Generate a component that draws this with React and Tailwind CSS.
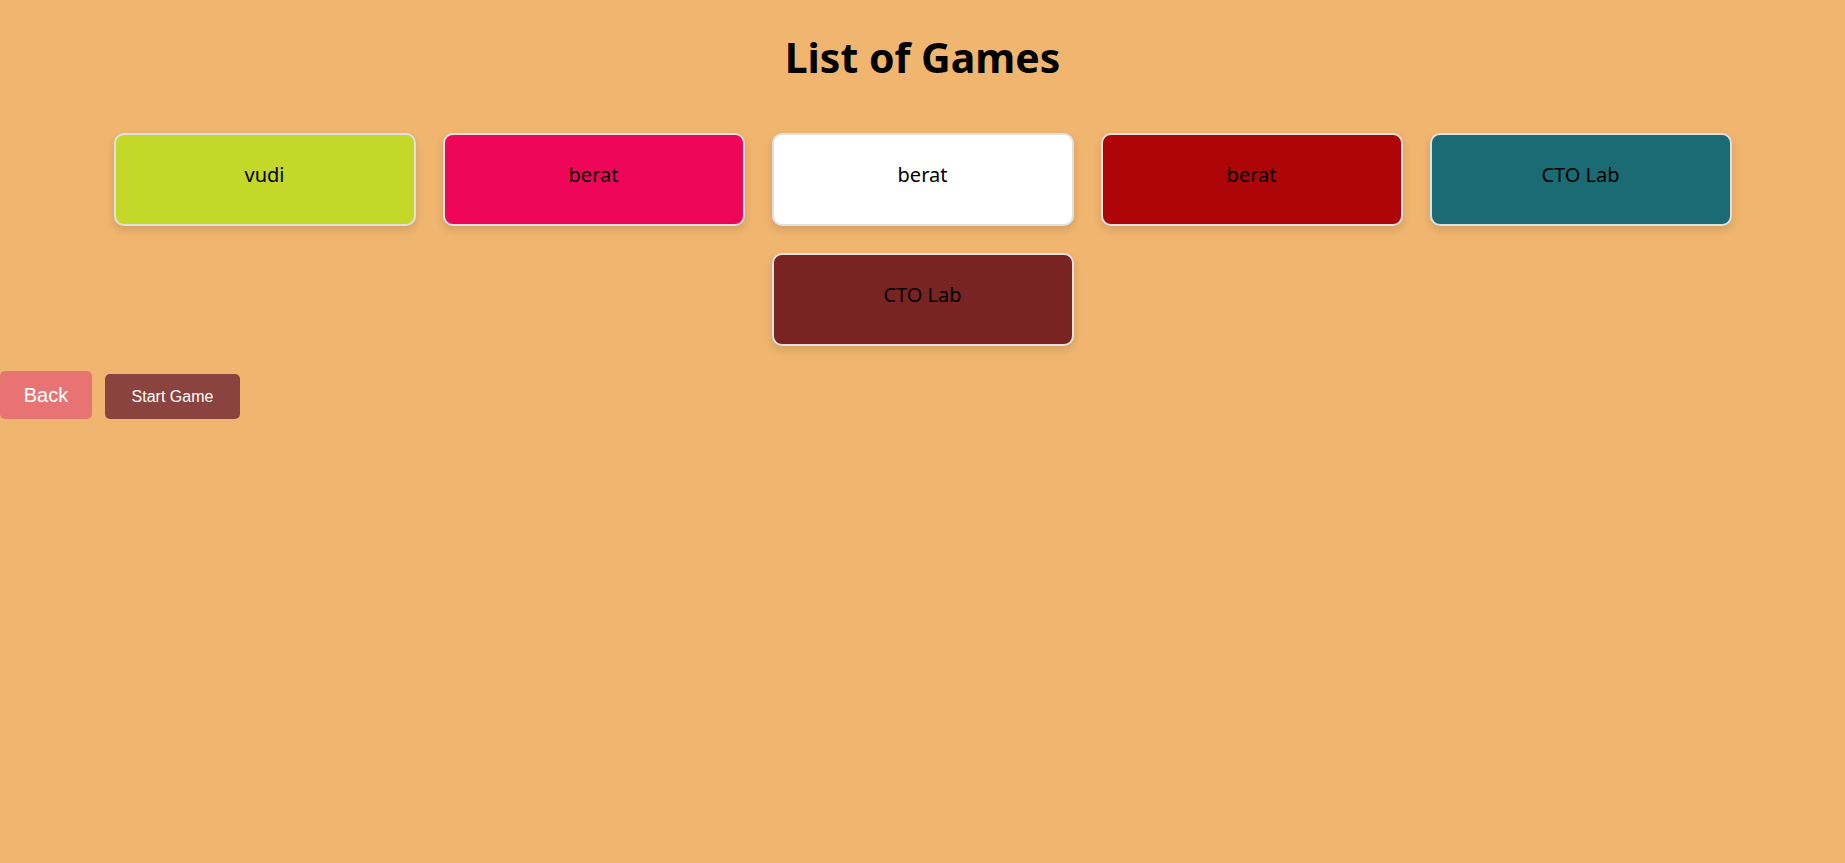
const GAMES = [
  { name: "vudi",    cls: "bg-[#c4d82a]" },
  { name: "berat",   cls: "bg-[#ee0759]" },
  { name: "berat",   cls: "bg-white" },
  { name: "berat",   cls: "bg-[#ad0508]" },
  { name: "CTO Lab", cls: "bg-[#1b6b74]" },
  { name: "CTO Lab", cls: "bg-[#7a2323]" },
];

function GameCard({ game }) {
  return (
    <div className={`w-[302px] h-[93px] m-[13.5px] rounded-[10px] border-2 border-[#e0e0e0] shadow-[0_4px_8px_rgba(0,0,0,0.12)] flex justify-center pt-[25px] text-[20px] leading-[30px] text-black ${game.cls}`}>
      {game.name}
    </div>
  );
}

export default function App() {
  return (
    <div className="min-h-[863px] bg-[#f0b56f] font-['Comic_Sans_MS','Noto_Sans',sans-serif]">
      <h1 className="pt-[27px] text-center text-[41px] leading-[60px] font-bold text-black">List of Games</h1>

      <div className="mt-[32px] px-[97px] flex flex-wrap justify-center">
        {GAMES.map((g, i) => <GameCard key={i} game={g} />)}
      </div>

      <div className="mt-[12px] flex items-end gap-[13px] font-['Liberation_Sans',Arial,sans-serif] text-white">
        <button className="w-[92px] h-[48px] rounded-[5px] bg-[#e87373] text-[20px]">Back</button>
        <button className="w-[135px] h-[45px] rounded-[5px] bg-[#8b4340] text-[16px]">Start Game</button>
      </div>
    </div>
  );
}
